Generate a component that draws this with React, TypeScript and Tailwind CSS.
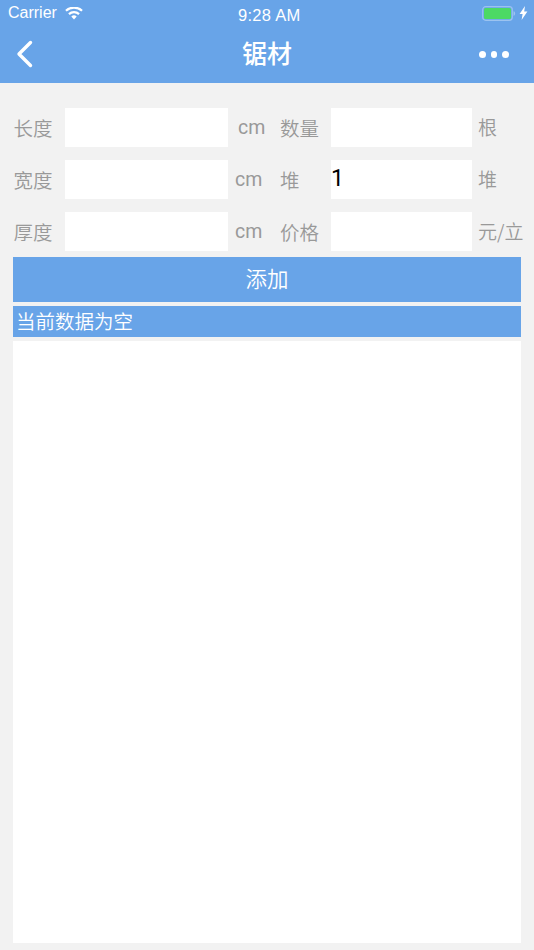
import React from "react";

const font = { fontFamily: '"Noto Sans CJK SC", "Liberation Sans", sans-serif' };
const latin = { fontFamily: '"Liberation Sans", sans-serif' };
const thin = { fontFamily: 'Roboto, "Liberation Sans", sans-serif' };

function Row({ a, b, c, d, unitIndent, value, mt }: { a: string; b: string; c: string; d: string; unitIndent: string; value?: string; mt: string }) {
  return (
    <div className={`flex h-[39px] items-center font-[350] ${mt}`}>
      <div className="w-[65px] pl-[13.5px] text-[19.5px] text-[#999999]">{a}</div>
      <div className="h-full w-[163px] bg-white" />
      <div className={`w-[52px] text-[19.5px] font-normal text-[#999999] ${unitIndent}`} style={thin}>{b}</div>
      <div className="w-[51px] text-[19.5px] text-[#999999]">{c}</div>
      <div className="flex h-full w-[141px] items-center bg-white pb-[1px] text-[23px] font-normal text-black" style={thin}>{value}</div>
      <div className="whitespace-nowrap pl-[6px] text-[19px] text-[#999999]">{d}</div>
    </div>
  );
}

export default function App() {
  return (
    <div className="flex h-[950px] w-[534px] flex-col overflow-hidden bg-[#f2f2f2]" style={font}>
      <header className="h-[83px] shrink-0 bg-[#68a4e8] text-white">
        <div className="relative flex h-[28px] items-center justify-between pl-[8px] pr-[6px]" style={latin}>
          <div className="-mt-[2px] flex items-center gap-[8px] text-[16px]">
            <span>Carrier</span>
            <svg width="18" height="13" viewBox="0 0 18 13" fill="white">
              <path d="M9 12.6 6.3 9.6a4 4 0 0 1 5.4 0Z" />
              <path d="M4.7 7.9 3.2 6.2a8.8 8.8 0 0 1 11.6 0l-1.5 1.7a6.5 6.5 0 0 0-8.6 0Z" />
              <path d="M1.7 4.6.2 2.9a13.2 13.2 0 0 1 17.6 0l-1.5 1.7a11 11 0 0 0-14.6 0Z" />
            </svg>
          </div>
          <span className="absolute left-[238px] top-[3px] text-[16.5px] tracking-[0.3px]">9:28 AM</span>
          <div className="-mt-[2px] flex items-center gap-[3px]">
            <svg width="34" height="15" viewBox="0 0 34 15">
              <rect x="0.7" y="0.7" width="29.6" height="13.6" rx="3" fill="none" stroke="#9cc3f0" strokeWidth="1.2" />
              <rect x="2" y="2" width="27" height="11" rx="1.6" fill="#4cd964" />
              <path d="M31.5 5.2c1.2.3 1.6 1.2 1.6 2.3s-.4 2-1.6 2.3Z" fill="#9cc3f0" />
            </svg>
            <svg width="9" height="14" viewBox="0 0 9 14" fill="white">
              <path d="M6 0 .6 8h3L2.6 14 8.4 5.6H5.2Z" />
            </svg>
          </div>
        </div>
        <div className="relative flex h-[55px] items-center justify-center">
          <svg className="absolute left-[15px] top-[12px]" width="18" height="28" viewBox="0 0 18 28" fill="none">
            <path d="M15.5 2.5 4 14l11.5 11.5" stroke="white" strokeWidth="3.4" strokeLinecap="round" strokeLinejoin="round" />
          </svg>
          <span className="-mt-[6px] text-[25px] font-medium leading-none">锯材</span>
          <div className="absolute left-[479px] top-[23px] flex gap-[5px]">
            <span className="h-[6.5px] w-[6.5px] rounded-full bg-white" />
            <span className="h-[6.5px] w-[6.5px] rounded-full bg-white" />
            <span className="h-[6.5px] w-[6.5px] rounded-full bg-white" />
          </div>
        </div>
      </header>
      <main className="flex min-h-0 flex-1 flex-col">
        <Row mt="mt-[25px]" a="长度" b="cm" c="数量" d="根" unitIndent="pl-[10px]" />
        <Row mt="mt-[13px]" a="宽度" b="cm" c="堆" d="堆" unitIndent="pl-[7px]" value="1" />
        <Row mt="mt-[13px]" a="厚度" b="cm" c="价格" d="元/立" unitIndent="pl-[7px]" />
        <div className="mx-[13px] mt-[6px] flex h-[45px] items-center justify-center bg-[#68a4e8] pb-[2px] text-[21.5px] font-[350] text-white">添加</div>
        <div className="mx-[13px] mt-[4px] flex h-[31px] items-center bg-[#68a4e8] pl-[3px] pb-[1px] text-[19.5px] font-[350] text-white">当前数据为空</div>
        <div className="mx-[13px] mt-[4px] h-[602px] bg-white" />
      </main>
    </div>
  );
}
